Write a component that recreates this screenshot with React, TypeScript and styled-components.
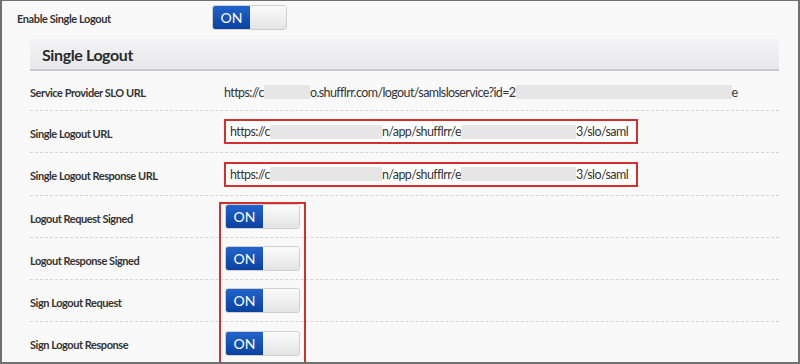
import styled, { createGlobalStyle } from 'styled-components';

const GlobalStyle = createGlobalStyle`
  body {
    margin: 0;
    font-family: Lato, "Open Sans", sans-serif;
    background: #ffffff;
  }
`;

const Frame = styled.div`
  box-sizing: border-box;
  width: 800px;
  height: 364px;
  border: 2px solid #6f6f6f;
  border-top-width: 1px;
  background: #f9f9f9;
  overflow: hidden;
`;

const TopRow = styled.div`
  display: flex;
  align-items: center;
  height: 32px;
  padding-left: 15px;
`;

const TopLabel = styled.div`
  width: 195px;
  padding-top: 2px;
  font-size: 11px;
  font-weight: 700;
  letter-spacing: -0.4px;
  color: #333;
`;

const Panel = styled.div`
  margin: 6px 19px 0 28px;
`;

const PanelHeader = styled.div`
  box-sizing: border-box;
  height: 32px;
  display: flex;
  align-items: center;
  padding-left: 12px;
  background: linear-gradient(#f4f4f6, #e7e7eb);
  border-bottom: 2px solid #c9c9cd;
  border-radius: 3px 3px 0 0;
  font-size: 16px;
  font-weight: 700;
  letter-spacing: -0.4px;
  color: #2b2b2b;
`;

const Row = styled.div<{ $h: number; $last?: boolean }>`
  box-sizing: border-box;
  display: flex;
  align-items: center;
  height: ${p => p.$h}px;
  border-bottom: ${p => (p.$last ? 'none' : '1px dashed #d4d4d4')};
`;

const Label = styled.div`
  width: 194px;
  flex-shrink: 0;
  padding-top: 3px;
  font-size: 11px;
  font-weight: 700;
  letter-spacing: -0.45px;
  color: #333;
`;

const Value = styled.div`
  padding-top: 3px;
  font-size: 12.5px;
  letter-spacing: -0.6px;
  color: #333;
  white-space: nowrap;
  display: flex;
  align-items: center;
`;

const Redact = styled.span<{ $w: number }>`
  display: inline-block;
  width: ${p => p.$w}px;
  height: 14px;
  background: #e6e6e6;
`;

const UrlBox = styled.div`
  box-sizing: border-box;
  width: 414px;
  height: 25px;
  padding-left: 4px;
  display: flex;
  align-items: center;
  background: #fff;
  border: 2px solid #d32f2f;
  font-size: 12.5px;
  letter-spacing: -0.6px;
  color: #333;
  white-space: nowrap;
`;

const ToggleBox = styled.div<{ $offset?: number }>`
  display: flex;
  width: 75px;
  height: 25px;
  margin-left: ${p => p.$offset ?? 0}px;
  border-radius: 3px;
  overflow: hidden;
  border: 1px solid #cfcfcf;
  box-sizing: border-box;
`;

const ToggleOn = styled.div`
  width: 37px;
  display: flex;
  align-items: center;
  justify-content: center;
  background: linear-gradient(#2264cc, #0a419f);
  color: #fff;
  font-size: 14px;
`;

const ToggleOff = styled.div`
  flex: 1;
  background: linear-gradient(#fbfbfb, #e4e4e4);
`;

const ToggleGroup = styled.div`
  position: relative;
`;

const Highlight = styled.div`
  position: absolute;
  left: 189px;
  top: 6px;
  width: 87px;
  height: 200px;
  box-sizing: border-box;
  border: 2px solid #d32f2f;
  pointer-events: none;
`;

const Toggle = ({ offset }: { offset?: number }) => (
  <ToggleBox $offset={offset}>
    <ToggleOn>ON</ToggleOn>
    <ToggleOff />
  </ToggleBox>
);

const toggleRows = [
  'Logout Request Signed',
  'Logout Response Signed',
  'Sign Logout Request',
  'Sign Logout Response',
];

export default function App() {
  return (
    <>
      <GlobalStyle />
      <Frame>
        <TopRow>
          <TopLabel>Enable Single Logout</TopLabel>
          <Toggle />
        </TopRow>
        <Panel>
          <PanelHeader>Single Logout</PanelHeader>
          <Row $h={40}>
            <Label>Service Provider SLO URL</Label>
            <Value>
              https://c<Redact $w={46} />o.shufflrr.com/logout/samlsloservice?id=2<Redact $w={216} />e
            </Value>
          </Row>
          <Row $h={42}>
            <Label>Single Logout URL</Label>
            <UrlBox>
              https://c<Redact $w={112} />n/app/shufflrr/e<Redact $w={115} />3/slo/saml
            </UrlBox>
          </Row>
          <Row $h={43}>
            <Label>Single Logout Response URL</Label>
            <UrlBox>
              https://c<Redact $w={112} />n/app/shufflrr/e<Redact $w={115} />3/slo/saml
            </UrlBox>
          </Row>
          <ToggleGroup>
            {toggleRows.map((t, i) => (
              <Row key={t} $h={42} $last={i === toggleRows.length - 1}>
                <Label>{t}</Label>
                <Toggle offset={1} />
              </Row>
            ))}
            <Highlight />
          </ToggleGroup>
        </Panel>
      </Frame>
    </>
  );
}
